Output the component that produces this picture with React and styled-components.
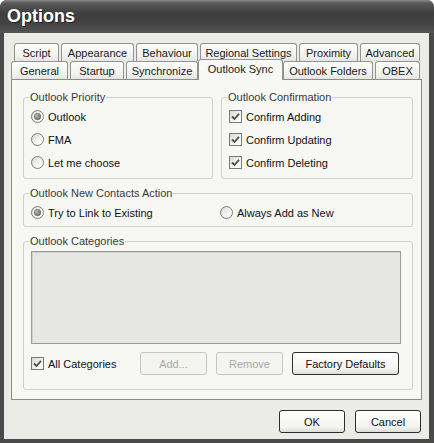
import React from 'react';
import styled, { createGlobalStyle } from 'styled-components';

const GlobalStyle = createGlobalStyle`
    body{
        margin:0;
        background:#fff;
        font-family:"Liberation Sans", Arial, sans-serif;
        font-size:11px;
        color:#111;
    }
`;

const Window = styled.div`
    width:434px;
    height:443px;
    box-sizing:border-box;
    background:#4a4a4a;
    border-radius:7px 7px 0 0;
    overflow:hidden;
    display:flex;
    flex-direction:column;
`;

const TitleBar = styled.div`
    height:33px;
    flex:none;
    display:flex;
    align-items:center;
    padding-left:7px;
    background:linear-gradient(#8a8a8a 0, #5a5a5a 3px, #3e3e3e 40%, #444 75%, #555 100%);
    color:#fff;
    font-size:18px;
    font-weight:bold;
    text-shadow:1px 1px 0 #222;
`;

const Body = styled.div`
    flex:1;
    margin:0 5px 4px 4px;
    padding-top:10px;
    background:#ebebe7;
    display:flex;
    flex-direction:column;
`;

const TabRow = styled.div`
    display:flex;
    align-items:flex-end;
    gap:2px;
    height:18px;
    padding-left:${p => p.$indent}px;
`;

const Tab = styled.div`
    position:relative;
    z-index:${p => (p.$active ? 2 : 1)};
    box-sizing:border-box;
    width:${p => p.$w}px;
    height:${p => (p.$active ? 21 : 18)}px;
    margin:${p => (p.$active ? '-2px -2px -1px -2px' : '0')};
    border:1px solid #939393;
    border-bottom:none;
    border-radius:3px 3px 0 0;
    background:${p => (p.$active ? '#f8f8f6' : 'linear-gradient(#fefefe, #f1f1ee 70%, #e4e4e0)')};
    display:flex;
    align-items:center;
    justify-content:center;
    padding-bottom:${p => (p.$active ? 2 : 0)}px;
    white-space:nowrap;
    color:#1a1a1a;
`;

const Panel = styled.div`
    box-sizing:border-box;
    height:321px;
    margin:0 7px;
    border:1px solid #8c8c8c;
    background:#f7f7f4;
    padding:11px 8px 0 11px;
    display:flex;
    flex-direction:column;
    gap:8px;
`;

const TopGrid = styled.div`
    display:grid;
    grid-template-columns:190px 1fr;
    gap:8px;
`;

const Group = styled.fieldset`
    margin:0;
    min-width:0;
    border:1px solid #cfcfcb;
    border-radius:3px;
    padding:${p => p.$pad || '1px 6px 4px 7px'};
`;

const Legend = styled.legend`
    margin-left:-2px;
    padding:0 1px;
    line-height:13px;
    color:#3a3a3a;
`;

const OptionRow = styled.label`
    height:23px;
    display:flex;
    align-items:center;
    gap:4px;
    white-space:nowrap;
`;

const Radio = styled.span`
    box-sizing:border-box;
    width:13px;
    height:13px;
    flex:none;
    border-radius:50%;
    border:1px solid #7c7c7c;
    background:linear-gradient(135deg, #d6d6d2, #f6f6f4 60%, #fff);
    display:flex;
    align-items:center;
    justify-content:center;
    &::after{
        content:"";
        display:${p => (p.$on ? 'block' : 'none')};
        width:7px;
        height:7px;
        border-radius:50%;
        background:radial-gradient(circle at 40% 40%, #b9b9b9, #6a6a6a 70%, #555);
    }
`;

const Box = styled.span`
    box-sizing:border-box;
    width:13px;
    height:13px;
    flex:none;
    border:1px solid #7a7a7a;
    background:linear-gradient(135deg, #d8d8d4, #f4f4f2 60%, #fff);
    display:flex;
    align-items:center;
    justify-content:center;
`;

const ContactsGrid = styled.div`
    display:grid;
    grid-template-columns:189px 1fr;
`;

const ListBox = styled.div`
    box-sizing:border-box;
    height:93px;
    margin:3px 0 0;
    border:1px solid #9c9c9c;
    box-shadow:inset 1px 1px 0 #d2d2ce;
    background:#e6e6e2;
`;

const CategoryBar = styled.div`
    display:flex;
    align-items:center;
    gap:9px;
    margin-top:8px;
`;

const AllCats = styled(OptionRow)`
    width:100px;
`;

const Button = styled.button`
    box-sizing:border-box;
    width:${p => p.$w}px;
    height:23px;
    padding:0;
    border-radius:3px;
    font-family:inherit;
    font-size:11px;
    border:1px solid ${p => (p.disabled ? '#c6c6c2' : '#2e2e2e')};
    color:${p => (p.disabled ? '#a9a9a7' : '#111')};
    background:${p => (p.disabled ? '#f4f4f1' : 'linear-gradient(#fff, #f4f4f1 75%, #dcdcd8)')};
`;

const Footer = styled.div`
    display:flex;
    justify-content:flex-end;
    gap:10px;
    margin:10px 8px 0 0;
`;

const Check = () => (
    <Box>
        <svg width="9" height="9" viewBox="0 0 9 9">
            <path d="M1 4.5 L3.5 7 L8 1.8" fill="none" stroke="#4e4e4e" strokeWidth="1.8" />
        </svg>
    </Box>
);

const row1 = [
    ['Script', 45], ['Appearance', 73], ['Behaviour', 62],
    ['Regional Settings', 97], ['Proximity', 59], ['Advanced', 60],
];
const row2 = [
    ['General', 57], ['Startup', 54], ['Synchronize', 72],
    ['Outlook Sync', 85, true], ['Outlook Folders', 90], ['OBEX', 45],
];

const App = () => {
    return (
        <>
            <GlobalStyle />
            <Window>
                <TitleBar>Options</TitleBar>
                <Body>
                    <TabRow $indent={10}>
                        {row1.map(([t, w]) => <Tab key={t} $w={w}>{t}</Tab>)}
                    </TabRow>
                    <TabRow $indent={7}>
                        {row2.map(([t, w, a]) => <Tab key={t} $w={w} $active={a}>{t}</Tab>)}
                    </TabRow>
                    <Panel>
                        <TopGrid>
                            <Group>
                                <Legend>Outlook Priority</Legend>
                                <OptionRow><Radio $on />Outlook</OptionRow>
                                <OptionRow><Radio />FMA</OptionRow>
                                <OptionRow><Radio />Let me choose</OptionRow>
                            </Group>
                            <Group>
                                <Legend>Outlook Confirmation</Legend>
                                <OptionRow><Check />Confirm Adding</OptionRow>
                                <OptionRow><Check />Confirm Updating</OptionRow>
                                <OptionRow><Check />Confirm Deleting</OptionRow>
                            </Group>
                        </TopGrid>
                        <Group $pad="1px 6px 2px 7px">
                            <Legend>Outlook New Contacts Action</Legend>
                            <ContactsGrid>
                                <OptionRow><Radio $on />Try to Link to Existing</OptionRow>
                                <OptionRow><Radio />Always Add as New</OptionRow>
                            </ContactsGrid>
                        </Group>
                        <Group $pad="0 11px 14px 7px">
                            <Legend>Outlook Categories</Legend>
                            <ListBox />
                            <CategoryBar>
                                <AllCats><Check />All Categories</AllCats>
                                <Button $w={67} disabled>Add...</Button>
                                <Button $w={67} disabled>Remove</Button>
                                <Button $w={107}>Factory Defaults</Button>
                            </CategoryBar>
                        </Group>
                    </Panel>
                    <Footer>
                        <Button $w={66}>OK</Button>
                        <Button $w={66}>Cancel</Button>
                    </Footer>
                </Body>
            </Window>
        </>
    );
};

export default App;
